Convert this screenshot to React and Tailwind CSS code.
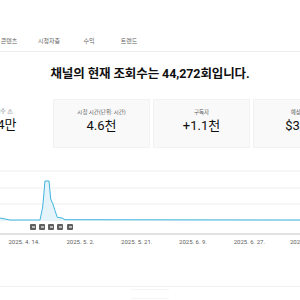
import React from 'react'

const FONT = "Roboto, 'Noto Sans CJK KR', 'Noto Sans', sans-serif"

const tabs = ['콘텐츠', '시청자층', '수익', '트렌드']

const cards = [
  { label: '조회수', value: '4.4만', active: true, warn: true },
  { label: '시청 시간(단위: 시간)', value: '4.6천' },
  { label: '구독자', value: '+1.1천' },
  { label: '예상 수익', value: '$3.69' },
]

const dates = ['2025. 4. 14.', '2025. 5. 2.', '2025. 5. 21.', '2025. 6. 9.', '2025. 6. 27.', '2025. 7. 16.']

const markers = [30, 39, 48, 57, 67]

// chart points, y measured from top of the svg (baseline 61)
const line = '0,59 10,61 40,61 42.7,48 45,22 49,22 50.7,40 53.3,46 55,51.7 57.3,58.3 62,59 65,60.7 300,61'

export default function App() {
  return (
    <div className="w-[300px] h-[300px] overflow-hidden bg-white text-[#0f0f0f] flex flex-col" style={{ fontFamily: FONT }}>
      {/* title, cut on the left */}
      <div className="h-[30px] shrink-0 pt-[5px]">
        <div className="ml-[-10.5px] text-[12px] leading-[14px] font-bold">석</div>
      </div>

      {/* tabs */}
      <div className="h-[22px] shrink-0 flex items-center border-b border-[#eeeeee] ml-[-11px]">
        {tabs.map((t) => (
          <div key={t} className="w-[40px] text-center text-[6px] text-[#606060]">
            {t}
          </div>
        ))}
      </div>

      {/* heading */}
      <div className="h-[47px] shrink-0 flex items-center justify-center pb-[2px]">
        <h2 className="text-[12.5px] font-bold tracking-[-0.1px]">채널의 현재 조회수는 44,272회입니다.</h2>
      </div>

      {/* metric cards */}
      <div className="flex gap-[3px] ml-[-47px] h-[49px] shrink-0">
        {cards.map((c) => (
          <div
            key={c.label}
            className={`w-[97px] shrink-0 flex flex-col items-center pt-[9px] ${
              c.active ? 'bg-white' : 'bg-[#f9f9f9] border border-[#f2f2f2]'
            }`}
          >
            <div className="text-[5.5px] leading-[7px] text-[#606060] flex items-center gap-[2px]">
              {c.label}
              {c.warn && <span className="text-[5px]">⚠</span>}
            </div>
            <div className="text-[13px] leading-[16px] mt-[2px]">{c.value}</div>
          </div>
        ))}
      </div>

      {/* chart */}
      <div className="mt-[11px] shrink-0">
        <svg width="300" height="63" viewBox="0 0 300 63" className="block">
          <line x1="0" y1="12" x2="300" y2="12" stroke="#eeeeee" strokeWidth="1" />
          <line x1="0" y1="29" x2="300" y2="29" stroke="#eeeeee" strokeWidth="1" />
          <line x1="0" y1="45" x2="300" y2="45" stroke="#eeeeee" strokeWidth="1" />
          <polygon points={`${line} 300,62 0,62`} fill="#e4f4fa" />
          <polyline points={line} fill="none" stroke="#41b4de" strokeWidth="1" strokeLinejoin="round" />
        </svg>

        <div className="relative h-[6px] mt-[2px]">
          {markers.map((x) => (
            <div
              key={x}
              className="absolute top-0 w-[6px] h-[6px] bg-[#5f5f5f] rounded-[1px] flex items-center justify-center"
              style={{ left: x }}
            >
              <div className="w-[3px] h-[2px] bg-[#bdbdbd]" />
            </div>
          ))}
        </div>

        <div className="mt-[3px] h-[2px] bg-[#e2e2e2]" />

        <div className="flex ml-[-4px] mt-[3px]">
          {dates.map((d) => (
            <div key={d} className="w-[56.3px] shrink-0 text-center text-[6px] leading-[8px] text-[#606060]">
              {d}
            </div>
          ))}
        </div>
      </div>

      {/* bottom */}
      <div className="mt-auto h-[14px] shrink-0 border-t border-[#f0f0f0]">
        <div className="mx-auto mt-[2px] w-[38px] h-[10px] border-y border-[#f5f5f5]" />
      </div>
    </div>
  )
}
